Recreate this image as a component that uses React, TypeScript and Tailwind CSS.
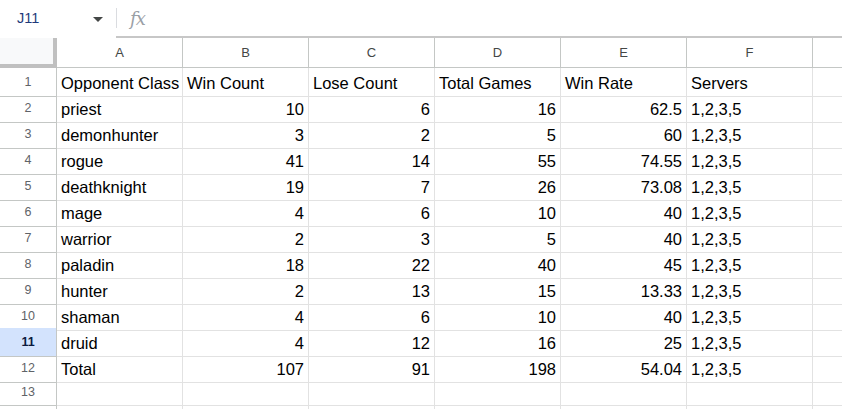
const cols = ["A", "B", "C", "D", "E", "F"];

const rows: (string | number)[][] = [
  ["Opponent Class", "Win Count", "Lose Count", "Total Games", "Win Rate", "Servers"],
  ["priest", 10, 6, 16, 62.5, "1,2,3,5"],
  ["demonhunter", 3, 2, 5, 60, "1,2,3,5"],
  ["rogue", 41, 14, 55, 74.55, "1,2,3,5"],
  ["deathknight", 19, 7, 26, 73.08, "1,2,3,5"],
  ["mage", 4, 6, 10, 40, "1,2,3,5"],
  ["warrior", 2, 3, 5, 40, "1,2,3,5"],
  ["paladin", 18, 22, 40, 45, "1,2,3,5"],
  ["hunter", 2, 13, 15, 13.33, "1,2,3,5"],
  ["shaman", 4, 6, 10, 40, "1,2,3,5"],
  ["druid", 4, 12, 16, 25, "1,2,3,5"],
  ["Total", 107, 91, 198, 54.04, "1,2,3,5"],
  ["", "", "", "", "", ""],
  ["", "", "", "", "", ""],
];

const gridCols = "grid grid-cols-[57px_126px_126px_126px_126px_126px_126px_1fr]";

export default function App() {
  return (
    <div className="w-[842px] h-[409px] overflow-hidden bg-white font-['Liberation_Sans',Arial,sans-serif]">
      {/* formula bar */}
      <div className="flex h-[38px]">
        <div className="w-[116px] flex items-center pl-[17px] pr-[13px] justify-between">
          <span className="text-[14.5px] text-[#1f3a7a]">J11</span>
          <svg width="10" height="6" viewBox="0 0 10 6" className="mt-[2px]">
            <polygon points="0,0 10,0 5,5" fill="#444746" />
          </svg>
        </div>
        <div className="flex-1 flex items-center border-b-2 border-[#c7c7c7]">
          <div className="w-px h-[20px] bg-[#dadce0]" />
          <span className="ml-[13px] text-[18px] italic text-[#9aa0a6] font-['DejaVu_Serif',serif] tracking-[-1px]">fx</span>
        </div>
      </div>

      {/* column headers */}
      <div className={`${gridCols} h-[30px]`}>
        <div className="bg-[#f8f9fa] border-r-4 border-b-4 border-[#c0c0c0]" />
        {cols.map((c) => (
          <div
            key={c}
            className="flex items-center justify-center border-r border-b border-[#c4c7c5] text-[13px] text-[#444746]"
          >
            {c}
          </div>
        ))}
        <div className="border-b border-[#c4c7c5]" />
      </div>

      {/* rows */}
      {rows.map((r, i) => {
        const selected = i === 10;
        return (
          <div key={i} className={`${gridCols} h-[26px]`}>
            <div
              className={`flex items-center justify-center border-r border-b border-[#c4c7c5] text-[12.5px] ${
                selected ? "bg-[#d3e3fd] text-[#0b1a3f] font-bold" : "text-[#5f6368]"
              }`}
            >
              {i < 13 ? i + 1 : ""}
            </div>
            {r.map((v, j) => (
              <div
                key={j}
                className={`flex items-center pt-[3px] px-[4px] border-r border-b border-[#e2e2e2] text-[16.5px] text-black whitespace-nowrap ${
                  typeof v === "number" ? "justify-end" : "justify-start"
                }`}
              >
                {v}
              </div>
            ))}
            <div className="border-b border-[#e2e2e2]" />
          </div>
        );
      })}
    </div>
  );
}
